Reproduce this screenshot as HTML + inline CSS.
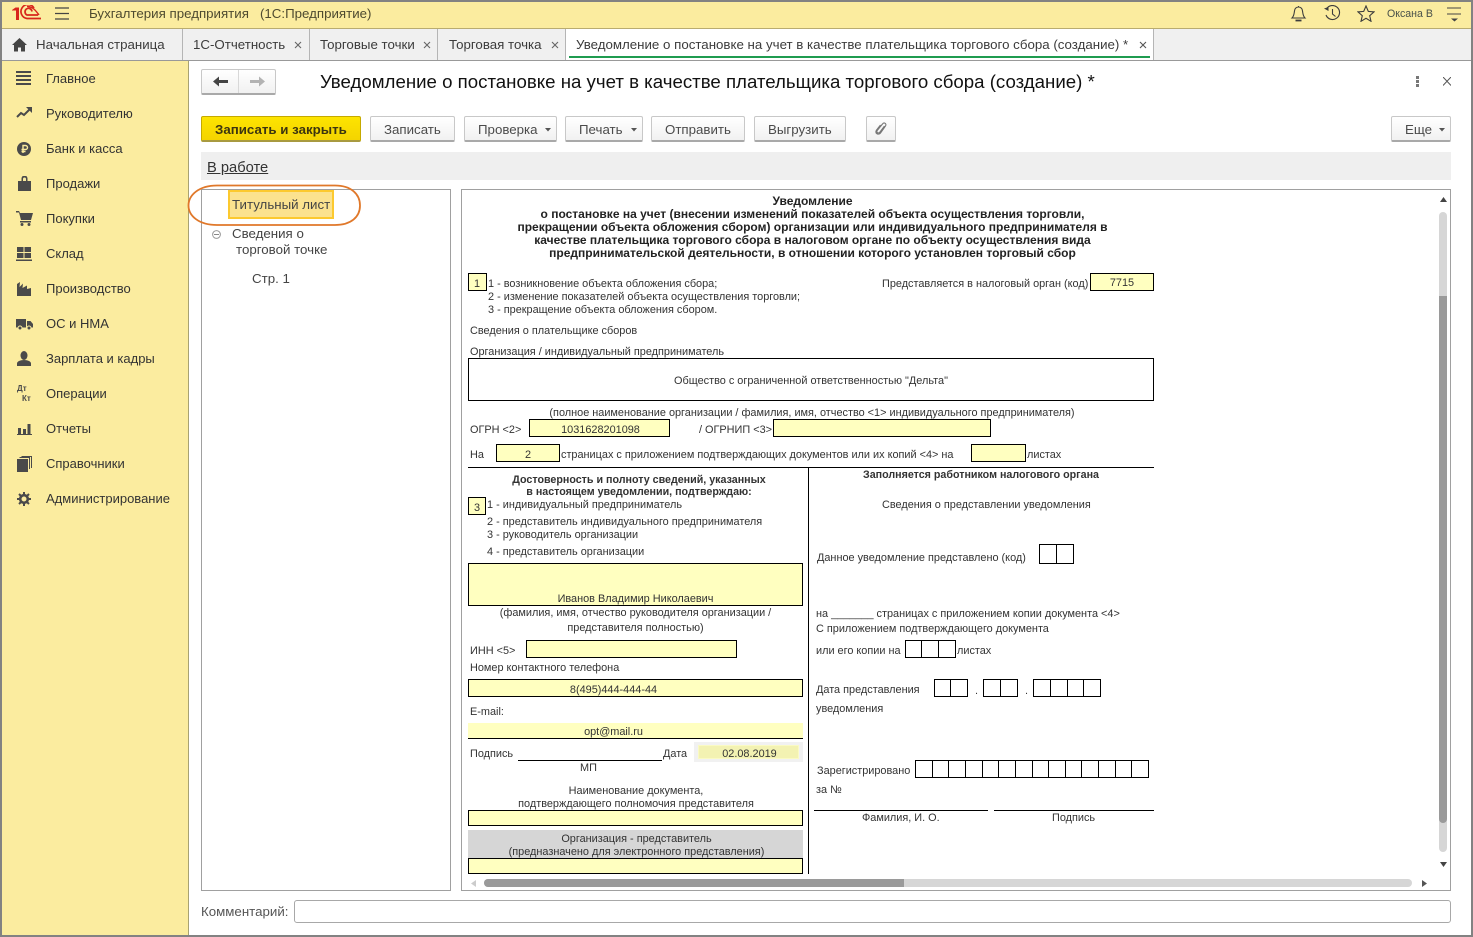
<!DOCTYPE html>
<html lang="ru"><head><meta charset="utf-8"><title>Уведомление</title>
<style>
html,body{margin:0;padding:0;background:#fff}
#r{position:relative;width:1473px;height:937px;overflow:hidden;background:#fff;font-family:"Liberation Sans",Arial,sans-serif;color:#333}
#r div,#r span.t,#r svg{position:absolute}
.t{position:absolute;white-space:nowrap;line-height:14px}
.m{font-size:13px;color:#333;left:46px}
.tab{font-size:13.3px;color:#3c3c3c;top:38px}
.b{background:linear-gradient(#fff,#f1f1f1);border:1px solid #c8c8c8;border-bottom:2px solid #a9a9a9;border-radius:2px;box-sizing:border-box;top:116px;height:26px}
.bt{font-size:13.3px;color:#4b4b4b;top:123px}
.f{font-size:10.9px;color:#333;margin-top:1px}
.bx{border:1px solid #000;box-sizing:border-box}
.y{background:#ffffc0;border:1px solid #000;box-sizing:border-box}
.c{text-align:center}
.sep{width:1px;top:29px;height:31px;background:#b5b5b5}
.ic{fill:#4a4a4a}
.lp{font-size:13.3px;color:#444}
</style></head><body><div id="r">
<!-- Top / tabs -->
<div style="left:0;top:0;width:1473px;height:29px;background:#fbec9f;border-bottom:1px solid #b9ac70;box-sizing:border-box"></div>
<div style="left:0;top:29px;width:1473px;height:31px;background:#f0f0f0"></div>
<div style="left:0;top:60px;width:1473px;height:1px;background:#999"></div>
<!-- sidebar -->
<div style="left:0;top:61px;width:188px;height:876px;background:#fbec9f"></div>
<div style="left:188px;top:61px;width:1px;height:876px;background:#a8a272"></div>

<svg style="left:12px;top:5px" width="30" height="16" viewBox="0 0 30 16"><path d="M0 5L3.500 2.500H7V15H4V5.500H0z" fill="#d8261c"/><path d="M22 3A7 7 0 1 0 15 13.500H29" fill="none" stroke="#d8261c" stroke-width="1.700"/><path d="M20 6.500A3.500 3.500 0 1 0 15 10H26" fill="none" stroke="#d8261c" stroke-width="1.700"/><path d="M15 1.500C21 1.500 24 6 27 10" fill="none" stroke="#d8261c" stroke-width="1.400"/></svg>
<svg style="left:55px;top:7px" width="15" height="13"><path d="M0 1h14M0 6.500h14M0 12h14" stroke="#444" stroke-width="1.200"/></svg>
<span class="t" style="left:89px;top:7px;font-size:13.3px;color:#4e4a30">Бухгалтерия предприятия&nbsp;&nbsp; (1С:Предприятие)</span>
<svg style="left:1290px;top:5px" width="17" height="18" viewBox="0 0 17 18"><path d="M2 13c2-2 2-4 2.500-7a4 4 0 0 1 8 0c.5 3 .5 5 2.500 7z" fill="none" stroke="#3d3d3d" stroke-width="1.100"/><path d="M8.500 1v1.500" stroke="#3d3d3d"/><path d="M5.500 15.500h6" stroke="#3d3d3d" stroke-width="1.800"/></svg>
<svg style="left:1324px;top:5px" width="17" height="17" viewBox="0 0 17 17"><path d="M2.500 4A7 7 0 1 1 2 10" fill="none" stroke="#3d3d3d" stroke-width="1.100"/><path d="M0 3.500l4.500-1.500v4z" fill="#3d3d3d"/><path d="M8.500 4v5l3 2.500" fill="none" stroke="#3d3d3d" stroke-width="1.100"/></svg>
<svg style="left:1357px;top:5px" width="18" height="17" viewBox="0 0 18 17"><path d="M9 1l2.300 5.400 5.700.5-4.300 3.800 1.300 5.600L9 13.300l-5 3 1.300-5.600L1 6.900l5.700-.5z" fill="none" stroke="#3d3d3d" stroke-width="1.100"/></svg>
<span class="t" style="left:1387px;top:7px;font-size:10.600px;color:#48504a">Оксана В</span>
<svg style="left:1447px;top:7px" width="15" height="15"><path d="M0 1h14M0 7h14" stroke="#444" stroke-width="1.100"/><path d="M4 11.500h7l-3.500 3z" fill="#444"/></svg>

<!-- tabs -->
<svg style="left:12px;top:38px" width="15" height="14" viewBox="0 0 15 14"><path d="M7.500 0L0 7h2v6.500h4v-4h3v4h4V7h2z" fill="#444"/></svg>
<span class="t tab" style="left:36px">Начальная страница</span>
<div class="sep" style="left:182px"></div>
<span class="t tab" style="left:193px">1С-Отчетность</span>
<svg style="left:294px;top:41px" width="8" height="8"><path d="M1 1l6 6M7 1l-6 6" stroke="#666" stroke-width="1.100"/></svg>
<div class="sep" style="left:309px"></div>
<span class="t tab" style="left:320px">Торговые точки</span>
<svg style="left:423px;top:41px" width="8" height="8"><path d="M1 1l6 6M7 1l-6 6" stroke="#666" stroke-width="1.100"/></svg>
<div class="sep" style="left:437px"></div>
<span class="t tab" style="left:449px">Торговая точка</span>
<svg style="left:551px;top:41px" width="8" height="8"><path d="M1 1l6 6M7 1l-6 6" stroke="#666" stroke-width="1.100"/></svg>
<div class="sep" style="left:565px"></div>
<div style="left:566px;top:29px;width:587px;height:31px;background:#fff"></div>
<div style="left:569px;top:56px;width:581px;height:2px;background:#1f9c50"></div>
<span class="t tab" style="left:576px">Уведомление о постановке на учет в качестве плательщика торгового сбора (создание) *</span>
<svg style="left:1139px;top:41px" width="8" height="8"><path d="M1 1l6 6M7 1l-6 6" stroke="#555" stroke-width="1.100"/></svg>
<div class="sep" style="left:1153px"></div>

<!-- menu -->
<svg style="left:16px;top:71px" width="16" height="14"><path d="M0 1h15M0 5h15M0 9h15M0 13h15" stroke="#4a4a4a" stroke-width="2"/></svg>
<span class="t m" style="top:72px">Главное</span>
<svg style="left:16px;top:107px" width="17" height="12" viewBox="0 0 17 12"><path d="M1 10l4-4 3 2 6-6" fill="none" stroke="#4a4a4a" stroke-width="2"/><path d="M10 0h6v6z" fill="#4a4a4a"/></svg>
<span class="t m" style="top:107px">Руководителю</span>
<svg style="left:17px;top:142px" width="14" height="14" viewBox="0 0 14 14"><circle cx="7" cy="7" r="7" fill="#4a4a4a"/><path d="M6 11V3.500h2.500a2 2 0 0 1 0 4H4.500M4.500 9.500H8.500" fill="none" stroke="#fbec9f" stroke-width="1.400"/></svg>
<span class="t m" style="top:142px">Банк и касса</span>
<svg style="left:18px;top:176px" width="13" height="15" viewBox="0 0 13 15"><path d="M0 5h3.500V2.500a3 3 0 0 1 6 0V5H13v10H0z" class="ic"/><path d="M5 5V3a1.500 1.500 0 0 1 3 0v2z" fill="#fbec9f"/></svg>
<span class="t m" style="top:177px">Продажи</span>
<svg style="left:16px;top:211px" width="17" height="15" viewBox="0 0 17 15"><path d="M0 0h3l1 2h13l-2 7H5L3 1.500H0z" class="ic"/><path d="M4 10h11v1.500H4z" class="ic"/><circle cx="6" cy="13.500" r="1.500" class="ic"/><circle cx="13" cy="13.500" r="1.500" class="ic"/></svg>
<span class="t m" style="top:212px">Покупки</span>
<svg style="left:16px;top:247px" width="16" height="14" viewBox="0 0 16 14"><path d="M1 0h6.500v5H1zM8.500 0H15v5H8.500zM1 6h6.500v5H1zM8.500 6H15v5H8.500zM0 12.500h16V14H0z" class="ic"/></svg>
<span class="t m" style="top:247px">Склад</span>
<svg style="left:16px;top:282px" width="16" height="14" viewBox="0 0 16 14"><path d="M1 14V2L4 0 3.500 5 7 1.500 6.500 6 11 3.500V7l4-1v8z" class="ic"/></svg>
<span class="t m" style="top:282px">Производство</span>
<svg style="left:16px;top:319px" width="17" height="11" viewBox="0 0 17 11"><path d="M0 0h10v8.500H0zM11 2h3.500L17 5v3.500h-6z" class="ic"/><circle cx="4" cy="9" r="2" fill="#4a4a4a" stroke="#fbec9f"/><circle cx="13" cy="9" r="2" fill="#4a4a4a" stroke="#fbec9f"/></svg>
<span class="t m" style="top:317px">ОС и НМА</span>
<svg style="left:17px;top:351px" width="14" height="15" viewBox="0 0 14 15"><ellipse cx="7" cy="4.500" rx="3.500" ry="4.500" class="ic"/><path d="M0 15v-2.500c0-2 3-3.500 7-3.500s7 1.500 7 3.500V15z" class="ic"/></svg>
<span class="t m" style="top:352px">Зарплата и кадры</span>
<span class="t" style="left:17px;top:384px;font-size:8px;font-weight:bold;color:#4a4a4a;line-height:9px">Дт</span>
<span class="t" style="left:22px;top:394px;font-size:8px;font-weight:bold;color:#4a4a4a;line-height:9px">Кт</span>
<span class="t m" style="top:387px">Операции</span>
<svg style="left:17px;top:424px" width="15" height="11" viewBox="0 0 15 11"><path d="M1 4h3v6H1zM6 5h3v5H6zM10.500 0h3v10h-3zM0 10h15v1H0z" class="ic"/></svg>
<span class="t m" style="top:422px">Отчеты</span>
<svg style="left:17px;top:456px" width="15" height="16" viewBox="0 0 15 16"><path d="M0 3h11v13H0z" class="ic"/><path d="M2.500 1.500h10V13M4.500 .5H14.500V12" fill="none" stroke="#4a4a4a"/></svg>
<span class="t m" style="top:457px">Справочники</span>
<svg style="left:17px;top:492px" width="14" height="14" viewBox="0 0 14 14"><circle cx="7" cy="7" r="3.800" fill="none" stroke="#4a4a4a" stroke-width="2.600"/><path d="M7 0v14M0 7h14M2 2l10 10M12 2L2 12" stroke="#4a4a4a" stroke-width="2" stroke-dasharray="2.500 9 2.500 0"/></svg>
<span class="t m" style="top:492px">Администрирование</span>

<!-- nav buttons -->
<div class="b" style="left:201px;top:69px;width:75px;height:26px"></div>
<div style="left:238px;top:70px;width:1px;height:23px;background:#d8d8d8"></div>
<svg style="left:213px;top:76px" width="16" height="11"><path d="M0 5.500L6 .5v3.500h9v3H6v3.500z" fill="#444"/></svg>
<svg style="left:250px;top:76px" width="16" height="11"><path d="M15 5.500L9 .5v3.500H0v3h9v3.500z" fill="#b3b3b3"/></svg>
<span class="t" style="left:320px;top:71px;font-size:18.670px;line-height:21px;color:#111">Уведомление о постановке на учет в качестве плательщика торгового сбора (создание) *</span>
<svg style="left:1416px;top:76px" width="3" height="11"><path d="M0 0h3v3H0zM0 4h3v3H0zM0 8h3v3H0z" fill="#777"/></svg>
<svg style="left:1443px;top:77px" width="8" height="9"><path d="M0 0l8 8.500M8 0L0 8.500" stroke="#555" stroke-width="1"/></svg>

<!-- toolbar -->
<div style="left:201px;top:116px;width:160px;height:26px;background:linear-gradient(#fde400,#f4d400);border:1px solid #c5a900;border-bottom:2px solid #a89a40;box-sizing:border-box;border-radius:2px"></div>
<span class="t" style="left:215px;top:123px;font-size:13.300px;font-weight:bold;color:#3c3510">Записать и закрыть</span>
<div class="b" style="left:370px;width:85px"></div><span class="t bt" style="left:384px">Записать</span>
<div class="b" style="left:464px;width:93px"></div><span class="t bt" style="left:478px">Проверка</span>
<svg style="left:545px;top:128px" width="6" height="4"><path d="M0 0h6L3 3.500z" fill="#555"/></svg>
<div class="b" style="left:565px;width:78px"></div><span class="t bt" style="left:579px">Печать</span>
<svg style="left:631px;top:128px" width="6" height="4"><path d="M0 0h6L3 3.500z" fill="#555"/></svg>
<div class="b" style="left:651px;width:94px"></div><span class="t bt" style="left:665px">Отправить</span>
<div class="b" style="left:754px;width:92px"></div><span class="t bt" style="left:768px">Выгрузить</span>
<div class="b" style="left:866px;width:30px"></div>
<svg style="left:875px;top:122px" width="12" height="14" viewBox="0 0 12 14"><path d="M9.500 4L5 10c-1.500 2-4 .5-2.800-1.500L7.500 2C9-.2 12 1.800 10.500 4L5.500 11c-2 2.500-6 .5-4-3L5.500 3" fill="none" stroke="#777" stroke-width="1.100"/></svg>
<div class="b" style="left:1391px;width:60px"></div><span class="t bt" style="left:1405px">Еще</span>
<svg style="left:1439px;top:128px" width="6" height="4"><path d="M0 0h6L3 3.500z" fill="#555"/></svg>

<!-- status -->
<div style="left:201px;top:152px;width:1250px;height:28px;background:#efefef"></div>
<span class="t" style="left:207px;top:161px;font-size:14.700px;color:#333;text-decoration:underline">В работе</span>

<!-- left panel -->
<div style="left:201px;top:189px;width:250px;height:702px;border:1px solid #a0a0a0;box-sizing:border-box"></div>
<div style="left:228px;top:190px;width:106px;height:29px;background:#fbe28f;border:2px solid #fcc92f;box-sizing:border-box"></div>
<span class="t lp" style="left:232px;top:198px">Титульный лист</span>
<svg style="left:187px;top:184px" width="176" height="44"><path d="M30 1.500H148C164 1.500 173 10 173 21.500S164 41 148 41H30C12 41 1.500 32 1.500 21.500S12 1.500 30 1.500z" fill="none" stroke="#e0782a" stroke-width="1.800"/></svg>
<svg style="left:212px;top:230px" width="9" height="9"><circle cx="4.500" cy="4.500" r="3.900" fill="none" stroke="#999"/><path d="M2 4.500h5" stroke="#888"/></svg>
<span class="t lp" style="left:232px;top:227px">Сведения о</span>
<span class="t lp" style="left:236px;top:243px">торговой точке</span>
<span class="t lp" style="left:252px;top:272px">Стр. 1</span>

<!-- right panel -->
<div style="left:461px;top:189px;width:990px;height:702px;border:1px solid #a0a0a0;box-sizing:border-box"></div>
<div style="left:1439px;top:212px;width:8px;height:640px;background:#d6d6d6;border-radius:4px"></div>
<div style="left:1439px;top:296px;width:8px;height:527px;background:#9a9a9a;border-radius:0 0 4px 4px"></div>
<svg style="left:1440px;top:197px" width="7" height="5"><path d="M0 5h7L3.500 0z" fill="#444"/></svg>
<svg style="left:1440px;top:862px" width="7" height="5"><path d="M0 0h7L3.500 5z" fill="#444"/></svg>
<div style="left:484px;top:879px;width:928px;height:8px;background:#d6d6d6;border-radius:4px"></div>
<div style="left:484px;top:879px;width:420px;height:8px;background:#9a9a9a;border-radius:4px 0 0 4px"></div>
<svg style="left:471px;top:880px" width="5" height="7"><path d="M5 0v7L0 3.500z" fill="#ccc"/></svg>
<svg style="left:1422px;top:880px" width="5" height="7"><path d="M0 0v7l5-3.500z" fill="#555"/></svg>

<!-- comment -->
<span class="t" style="left:201px;top:905px;font-size:13.300px;color:#555">Комментарий:</span>
<div style="left:294px;top:900px;width:1157px;height:23px;border:1px solid #a8a8a8;border-radius:3px;box-sizing:border-box"></div>

<!-- form heading -->
<span class="t f c" style="left:462px;width:701px;top:194px;font-size:12px;font-weight:bold;color:#222;line-height:13px;white-space:normal">Уведомление<br>о постановке на учет (внесении изменений показателей объекта осуществления торговли,<br>прекращении объекта обложения сбором) организации или индивидуального предпринимателя в<br>качестве плательщика торгового сбора в налоговом органе по объекту осуществления вида<br>предпринимательской деятельности, в отношении которого установлен торговый сбор</span>

<div class="y" style="left:468px;top:273px;width:19px;height:18px"></div>
<span class="t f" style="left:474px;top:276px">1</span>
<span class="t f" style="left:488px;top:276px">1 - возникновение объекта обложения сбора;</span>
<span class="t f" style="left:488px;top:289px">2 - изменение показателей объекта осуществления торговли;</span>
<span class="t f" style="left:488px;top:302px">3 - прекращение объекта обложения сбором.</span>
<span class="t f" style="left:882px;top:276px">Представляется в налоговый орган (код)</span>
<div class="y" style="left:1090px;top:273px;width:64px;height:18px"></div>
<span class="t f c" style="left:1090px;width:64px;top:275px">7715</span>
<span class="t f" style="left:470px;top:323px">Сведения о плательщике сборов</span>
<span class="t f" style="left:470px;top:344px">Организация / индивидуальный предприниматель</span>
<div class="bx" style="left:468px;top:358px;width:686px;height:43px"></div>
<span class="t f c" style="left:468px;width:686px;top:373px">Общество с ограниченной ответственностью "Дельта"</span>
<span class="t f c" style="left:468px;width:688px;top:405px">(полное наименование организации / фамилия, имя, отчество &lt;1&gt; индивидуального предпринимателя)</span>
<span class="t f" style="left:470px;top:422px">ОГРН &lt;2&gt;</span>
<div class="y" style="left:529px;top:419px;width:141px;height:18px"></div>
<span class="t f c" style="left:530px;width:141px;top:422px">1031628201098</span>
<span class="t f" style="left:699px;top:422px">/ ОГРНИП &lt;3&gt;</span>
<div class="y" style="left:773px;top:419px;width:218px;height:18px"></div>
<span class="t f" style="left:470px;top:447px">На</span>
<div class="y" style="left:496px;top:444px;width:64px;height:18px"></div>
<span class="t f c" style="left:496px;width:64px;top:447px">2</span>
<span class="t f" style="left:561px;top:447px">страницах с приложением подтверждающих документов или их копий &lt;4&gt; на</span>
<div class="y" style="left:971px;top:444px;width:55px;height:18px"></div>
<span class="t f" style="left:1027px;top:447px">листах</span>
<div style="left:468px;top:467px;width:686px;height:1px;background:#000"></div>
<div style="left:808px;top:467px;width:1px;height:407px;background:#000"></div>

<!-- left column -->
<span class="t f c" style="left:468px;width:342px;top:473px;font-size:10.700px;font-weight:bold;color:#333;line-height:12px;white-space:normal">Достоверность и полноту сведений, указанных<br>в настоящем уведомлении, подтверждаю:</span>
<div class="y" style="left:468px;top:497px;width:18px;height:18px"></div>
<span class="t f" style="left:474px;top:500px">3</span>
<span class="t f" style="left:487px;top:497px">1 - индивидуальный предприниматель</span>
<span class="t f" style="left:487px;top:514px">2 - представитель индивидуального предпринимателя</span>
<span class="t f" style="left:487px;top:527px">3 - руководитель организации</span>
<span class="t f" style="left:487px;top:544px">4 - представитель организации</span>
<div class="y" style="left:468px;top:563px;width:335px;height:43px"></div>
<span class="t f c" style="left:468px;width:335px;top:591px">Иванов Владимир Николаевич</span>
<span class="t f c" style="left:468px;width:335px;top:605px">(фамилия, имя, отчество руководителя организации /</span>
<span class="t f c" style="left:468px;width:335px;top:620px">представителя полностью)</span>
<span class="t f" style="left:470px;top:643px">ИНН &lt;5&gt;</span>
<div class="y" style="left:526px;top:640px;width:211px;height:18px"></div>
<span class="t f" style="left:470px;top:660px">Номер контактного телефона</span>
<div class="y" style="left:468px;top:679px;width:335px;height:18px"></div>
<span class="t f c" style="left:468px;width:291px;top:682px">8(495)444-444-44</span>
<span class="t f" style="left:470px;top:704px">E-mail:</span>
<div style="left:468px;top:723px;width:335px;height:16px;background:#ffffc0;border-bottom:1px solid #000;box-sizing:border-box"></div>
<span class="t f c" style="left:468px;width:291px;top:724px">opt@mail.ru</span>
<span class="t f" style="left:470px;top:746px">Подпись</span>
<div style="left:518px;top:760px;width:144px;height:1px;background:#000"></div>
<span class="t f" style="left:663px;top:746px">Дата</span>
<div style="left:694px;top:742px;width:109px;height:20px;background:#f1f1f1"></div>
<div style="left:698px;top:745px;width:101px;height:14px;background:#f3f2b2;border:1px solid #fafac4;box-sizing:border-box"></div>
<span class="t f c" style="left:698px;width:103px;top:746px">02.08.2019</span>
<span class="t f" style="left:580px;top:760px">МП</span>
<span class="t f c" style="left:468px;width:336px;top:784px;line-height:13px;white-space:normal">Наименование документа,<br>подтверждающего полномочия представителя</span>
<div class="y" style="left:468px;top:810px;width:335px;height:16px"></div>
<div style="left:468px;top:830px;width:335px;height:28px;background:#d6d6d6"></div>
<span class="t f c" style="left:468px;width:337px;top:832px;line-height:13px;white-space:normal">Организация - представитель<br>(предназначено для электронного представления)</span>
<div class="y" style="left:468px;top:858px;width:335px;height:16px"></div>

<!-- right column -->
<span class="t f c" style="left:809px;width:344px;top:467px;font-size:10.700px;font-weight:bold;color:#333">Заполняется работником налогового органа</span>
<span class="t f" style="left:882px;top:497px">Сведения о представлении уведомления</span>
<span class="t f" style="left:817px;top:550px">Данное уведомление представлено (код)</span>
<div class="bx" style="left:1039px;top:544px;width:35px;height:20px"></div>
<div style="left:1056px;top:544px;width:1px;height:20px;background:#000"></div>
<span class="t f" style="left:816px;top:606px">на _______ страницах с приложением копии документа &lt;4&gt;</span>
<span class="t f" style="left:816px;top:621px">С приложением подтверждающего документа</span>
<span class="t f" style="left:816px;top:643px">или его копии на</span>
<div class="bx" style="left:905px;top:640px;width:51px;height:18px"></div>
<div style="left:921px;top:640px;width:1px;height:18px;background:#000"></div>
<div style="left:938px;top:640px;width:1px;height:18px;background:#000"></div>
<span class="t f" style="left:957px;top:643px">листах</span>
<span class="t f" style="left:816px;top:682px">Дата представления</span>
<div class="bx" style="left:934px;top:679px;width:34px;height:18px"></div>
<div style="left:950px;top:679px;width:1px;height:18px;background:#000"></div>
<span class="t f" style="left:975px;top:683px">.</span>
<div class="bx" style="left:983px;top:679px;width:35px;height:18px"></div>
<div style="left:1000px;top:679px;width:1px;height:18px;background:#000"></div>
<span class="t f" style="left:1025px;top:683px">.</span>
<div class="bx" style="left:1033px;top:679px;width:68px;height:18px"></div>
<div style="left:1050px;top:679px;width:1px;height:18px;background:#000"></div>
<div style="left:1067px;top:679px;width:1px;height:18px;background:#000"></div>
<div style="left:1083px;top:679px;width:1px;height:18px;background:#000"></div>
<span class="t f" style="left:816px;top:701px">уведомления</span>
<span class="t f" style="left:817px;top:763px">Зарегистрировано</span>
<div class="bx" style="left:915px;top:760px;width:234px;height:18px"></div>
<div style="left:932px;top:760px;width:1px;height:18px;background:#000"></div>
<div style="left:948px;top:760px;width:1px;height:18px;background:#000"></div>
<div style="left:965px;top:760px;width:1px;height:18px;background:#000"></div>
<div style="left:982px;top:760px;width:1px;height:18px;background:#000"></div>
<div style="left:998px;top:760px;width:1px;height:18px;background:#000"></div>
<div style="left:1015px;top:760px;width:1px;height:18px;background:#000"></div>
<div style="left:1032px;top:760px;width:1px;height:18px;background:#000"></div>
<div style="left:1048px;top:760px;width:1px;height:18px;background:#000"></div>
<div style="left:1065px;top:760px;width:1px;height:18px;background:#000"></div>
<div style="left:1081px;top:760px;width:1px;height:18px;background:#000"></div>
<div style="left:1098px;top:760px;width:1px;height:18px;background:#000"></div>
<div style="left:1115px;top:760px;width:1px;height:18px;background:#000"></div>
<div style="left:1131px;top:760px;width:1px;height:18px;background:#000"></div>
<span class="t f" style="left:816px;top:782px">за №</span>
<div style="left:814px;top:810px;width:174px;height:1px;background:#000"></div>
<div style="left:994px;top:810px;width:160px;height:1px;background:#000"></div>
<span class="t f" style="left:862px;top:810px">Фамилия, И. О.</span>
<span class="t f" style="left:1052px;top:810px">Подпись</span>

<!-- outer frame -->
<div style="left:0;top:0;width:1473px;height:937px;border:2px solid #828282;box-sizing:border-box"></div>
</div></body></html>
